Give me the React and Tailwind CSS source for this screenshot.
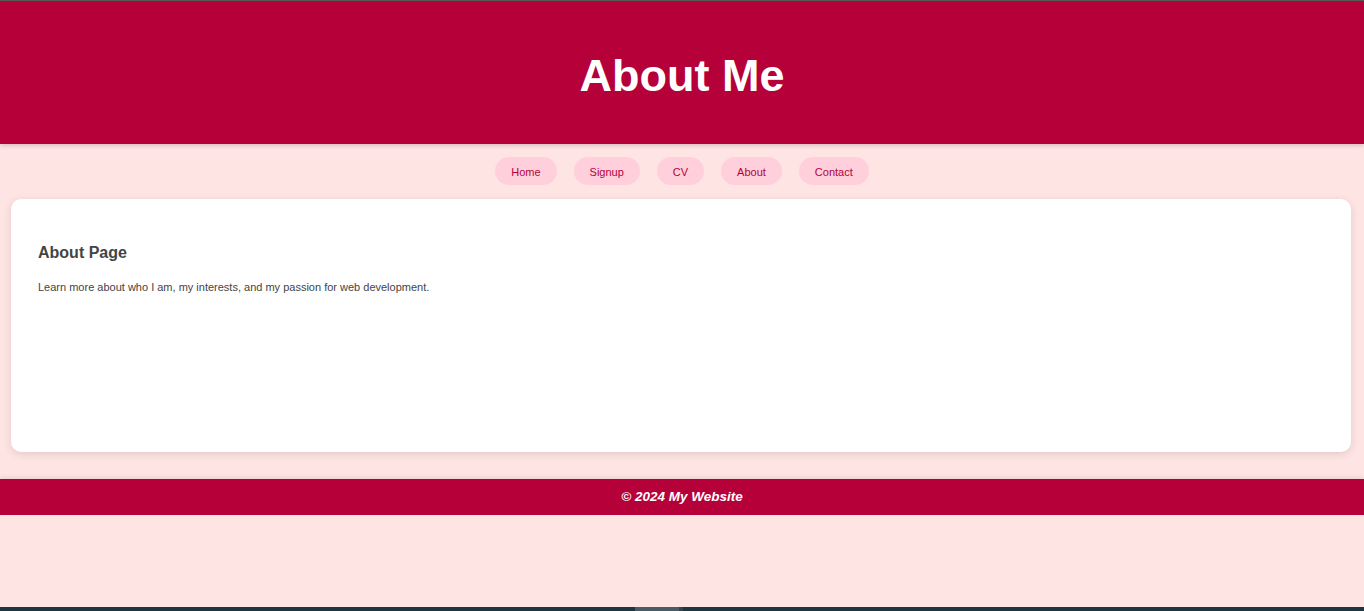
const links = ["Home", "Signup", "CV", "About", "Contact"]

export default function App() {
  return (
    <div
      className="h-[611px] flex flex-col bg-[#ffe4e4] overflow-hidden"
      style={{ fontFamily: '"Comic Sans MS", "Liberation Sans", Arial, sans-serif' }}
    >
      <div className="h-px bg-[#5a5a5a]" />

      <header className="h-[143px] bg-[#b5003a] flex items-center justify-center pt-[6px] shadow-[0_2px_4px_rgba(0,0,0,0.15)] relative z-10">
        <h1 className="text-[45px] font-bold text-white leading-none">About Me</h1>
      </header>

      <nav className="flex justify-center gap-[17px] pt-[13px] pb-[14px]">
        {links.map((l) => (
          <a key={l} className="h-7 px-4 pt-[2px] rounded-full bg-[#ffd0dc] text-[#b5003a] text-[11px] flex items-center">
            {l}
          </a>
        ))}
      </nav>

      <main className="ml-[11px] mr-[13px] h-[253px] bg-white rounded-[10px] shadow-[0_2px_8px_rgba(0,0,0,0.12)] px-[27px] pt-[44px]">
        <h2 className="text-[16px] font-bold text-[#444] leading-5">About Page</h2>
        <p className="mt-[16px] text-[11px] text-[#444] leading-4">
          Learn more about who I am, my interests, and my passion for web development.
        </p>
      </main>

      <footer className="mt-[27px] h-9 bg-[#b5003a] flex items-center justify-center pt-[1px] shadow-[0_-2px_4px_rgba(0,0,0,0.08)]">
        <p className="text-white text-[13.5px] font-bold italic">© 2024 My Website</p>
      </footer>

      <div className="flex-1" />

      <div className="h-1 bg-[#1f3540] flex">
        <div className="w-[635px]" />
        <div className="w-[44px] bg-[#4b5b66]" />
        <div className="w-[4px] bg-[#34454f]" />
      </div>
    </div>
  )
}
